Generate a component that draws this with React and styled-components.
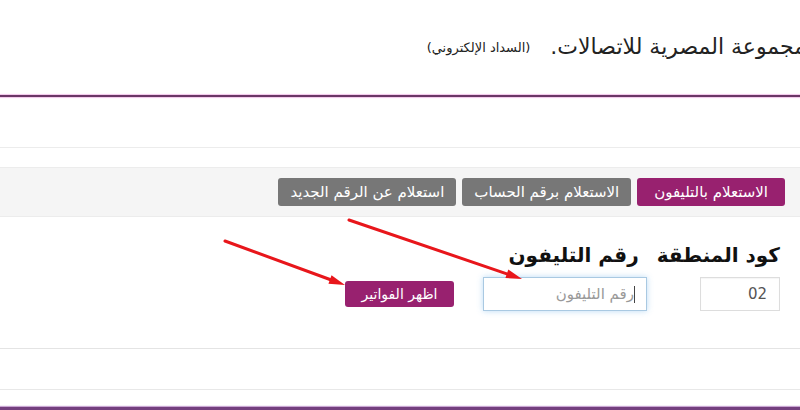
import React from "react";
import styled, { createGlobalStyle } from "styled-components";

const GlobalStyle = createGlobalStyle`
  html, body {
    margin: 0;
    padding: 0;
    background: #fff;
  }
  body {
    font-family: "DejaVu Sans", "Noto Sans", sans-serif;
    overflow: hidden;
  }
`;

const Page = styled.div`
  direction: rtl;
  width: 800px;
  height: 410px;
  overflow: hidden;
  background: #fff;
`;

const Header = styled.div`
  height: 95px;
  display: flex;
  align-items: flex-start;
  gap: 20px;
  padding-top: 34px;
  box-sizing: border-box;
`;

const Title = styled.h1`
  margin: 0 -6px 0 0;
  font-size: 22px;
  font-weight: normal;
  color: #222;
  white-space: nowrap;
`;

const SubTitle = styled.span`
  font-size: 13px;
  color: #222;
  margin-top: 6px;
`;

const Rule = styled.div`
  height: ${(p) => p.size || 1}px;
  background: ${(p) => p.color || "#e8e8e8"};
  box-shadow: ${(p) => (p.glow ? `0 0 1px 1px ${p.glow}` : "none")};
`;

const Gap = styled.div`
  height: ${(p) => p.h}px;
`;

const TabsBar = styled.div`
  height: 48px;
  background: #f5f5f5;
  border-top: 1px solid #ececec;
  border-bottom: 1px solid #ececec;
  display: flex;
  align-items: center;
  gap: 6px;
  padding-right: 15px;
`;

const Tab = styled.button`
  direction: rtl;
  height: 28px;
  padding: 0 ${(p) => (p.active ? 17 : 12)}px;
  border: none;
  border-radius: 3px;
  background: ${(p) => (p.active ? "#98216f" : "#777777")};
  color: #fff;
  font-family: inherit;
  font-size: 15px;
  cursor: pointer;
`;

const Form = styled.div`
  position: relative;
  height: 131px;
  padding: 26px 20px 0 0;
  box-sizing: border-box;
`;

const LabelRow = styled.div`
  display: flex;
  gap: 18px;
`;

const Label = styled.label`
  font-size: 20px;
  font-weight: bold;
  color: #111;
`;

const FieldRow = styled.div`
  display: flex;
  align-items: center;
  margin-top: 10px;
`;

const Input = styled.input`
  direction: rtl;
  box-sizing: border-box;
  width: ${(p) => p.w}px;
  height: 34px;
  margin-left: ${(p) => p.gap || 0}px;
  padding: 0 12px;
  border: 1px solid ${(p) => (p.focus ? "#a9c9e2" : "#dddddd")};
  box-shadow: ${(p) =>
    p.focus ? "0 0 6px rgba(102, 175, 233, 0.45)" : "inset 0 1px 1px rgba(0,0,0,0.04)"};
  font-family: inherit;
  font-size: 15px;
  color: #555;
  outline: none;
  &::placeholder {
    color: #999;
  }
`;

const Caret = styled.span`
  position: absolute;
  width: 1px;
  height: 17px;
  background: #444;
`;

const PhoneWrap = styled.div`
  position: relative;
  display: flex;
  align-items: center;
  margin-left: 29px;
  ${Caret} {
    right: 12px;
  }
`;

const ShowButton = styled.button`
  direction: rtl;
  height: 26px;
  width: 109px;
  border: none;
  border-radius: 3px;
  background: #98216f;
  color: #fff;
  font-family: inherit;
  font-size: 14px;
`;

const Arrows = styled.svg`
  position: absolute;
  left: 0;
  top: 0;
  pointer-events: none;
`;

const Arrow = ({ x1, y1, x2, y2 }) => {
  const ang = Math.atan2(y2 - y1, x2 - x1);
  const len = 16;
  const half = 4.5;
  const bx = x2 - len * Math.cos(ang);
  const by = y2 - len * Math.sin(ang);
  const px = -Math.sin(ang) * half;
  const py = Math.cos(ang) * half;
  return (
    <g>
      <line x1={x1} y1={y1} x2={bx} y2={by} stroke="#e8161b" strokeWidth="3" strokeLinecap="round" />
      <polygon points={`${x2},${y2} ${bx + px},${by + py} ${bx - px},${by - py}`} fill="#e8161b" />
    </g>
  );
};

export default function App() {
  return (
    <>
      <GlobalStyle />
      <Page>
        <Header>
          <Title>مجموعة المصرية للاتصالات.</Title>
          <SubTitle>(السداد الإلكتروني)</SubTitle>
        </Header>
        <Rule size={2} color="#6b3766" glow="#f2c6ea" />
        <Gap h={50} />
        <Rule color="#ececec" />
        <Gap h={19} />
        <TabsBar>
          <Tab active>الاستعلام بالتليفون</Tab>
          <Tab>الاستعلام برقم الحساب</Tab>
          <Tab>استعلام عن الرقم الجديد</Tab>
        </TabsBar>
        <Form>
          <LabelRow>
            <Label>كود المنطقة</Label>
            <Label>رقم التليفون</Label>
          </LabelRow>
          <FieldRow>
            <Input w={80} gap={53} defaultValue="02" />
            <PhoneWrap>
              <Input w={164} focus placeholder="رقم التليفون" />
              <Caret />
            </PhoneWrap>
            <ShowButton>اظهر الفواتير</ShowButton>
          </FieldRow>
          <Arrows width="800" height="131" viewBox="0 218 800 131">
            <Arrow x1={225} y1={242} x2={345} y2={286} />
            <Arrow x1={349} y1={221} x2={522} y2={280} />
          </Arrows>
        </Form>
        <Rule color="#e4e4e4" />
        <Gap h={40} />
        <Rule color="#e8e8e8" />
        <Gap h={17} />
        <Rule size={3} color="#74407f" glow="#c9a6d3" />
      </Page>
    </>
  );
}
